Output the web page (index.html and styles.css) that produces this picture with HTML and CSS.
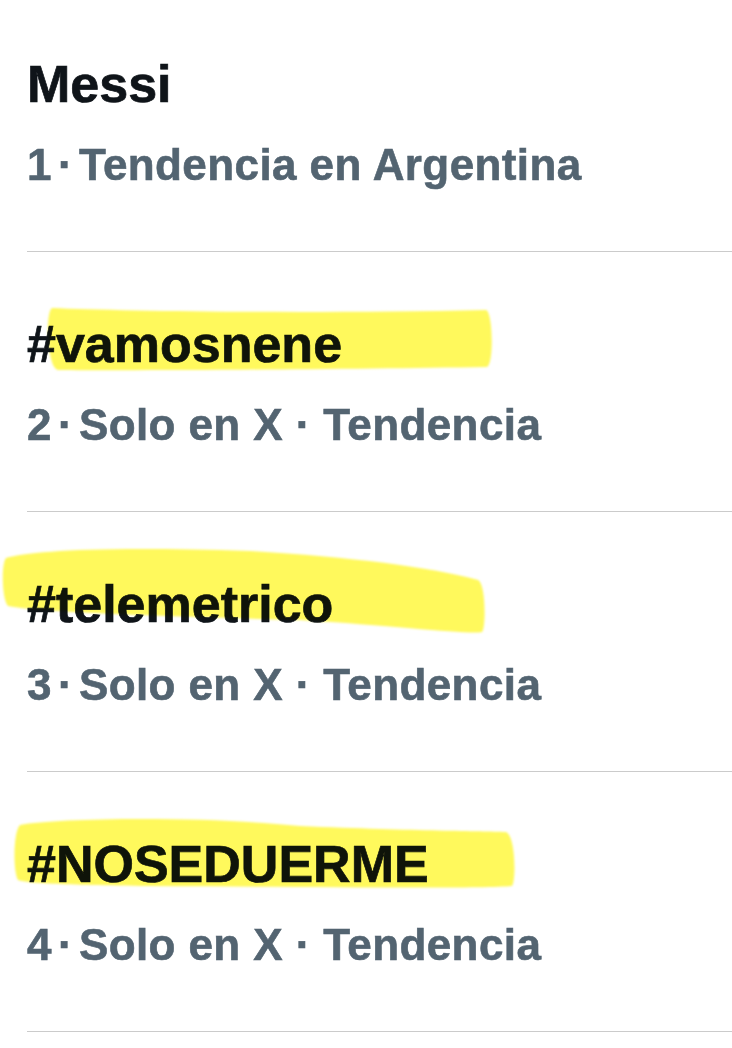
FILE: index.html
```html
<!DOCTYPE html>
<html lang="es">
<head>
  <meta charset="UTF-8" />
  <meta name="viewport" content="width=device-width, initial-scale=1.0" />
  <title>Tendencias</title>
  <link rel="stylesheet" href="styles.css">
</head>
<body>
  <div class="trends">
    <div class="trend">
      <div class="trend-name">Messi</div>
      <div class="trend-meta">1<span class="sep">·</span>Tendencia en Argentina</div>
    </div>

    <div class="trend">
      <div class="trend-name">#vamosnene</div>
      <div class="trend-meta">2<span class="sep">·</span>Solo en X · Tendencia</div>
      <svg class="marker" viewBox="0 0 732 259" width="732" height="259">
        <path d="M52 56 C120 59, 300 62, 486 58 C493 60, 494 112, 487 115 C350 117, 150 119, 58 118 C47 116, 45 60, 52 56 Z" />
      </svg>
    </div>

    <div class="trend">
      <div class="trend-name">#telemetrico</div>
      <div class="trend-meta">3<span class="sep">·</span>Solo en X · Tendencia</div>
      <svg class="marker" viewBox="0 0 732 259" width="732" height="259">
        <path d="M6 46 C30 39, 100 34, 250 39 C350 45, 430 55, 478 68 C486 72, 486 116, 482 120 C470 123, 400 114, 300 108 C150 104, 40 100, 8 94 C2 88, 1 52, 6 46 Z" />
      </svg>
    </div>

    <div class="trend">
      <div class="trend-name">#NOSEDUERME</div>
      <div class="trend-meta">4<span class="sep">·</span>Solo en X · Tendencia</div>
      <svg class="marker" viewBox="0 0 732 259" width="732" height="259">
        <path d="M20 53 C60 46, 200 44, 300 54 C420 59, 480 59, 506 60 C516 64, 516 110, 512 114 C480 117, 300 115, 150 114 C60 113, 25 111, 18 108 C13 100, 13 60, 20 53 Z" />
      </svg>
    </div>
  </div>
</body>
</html>
```

FILE: styles.css
```css
body {
  margin: 0;
  background: #ffffff;
  font-family: "Liberation Sans", Arial, sans-serif;
  overflow: hidden;
}
.trends {
  padding-left: 27px;
}
.trend {
  position: relative;
  padding: 62px 0 60px;
  border-bottom: 1px solid #cbcbcb;
}
.trend:first-child {
  padding-top: 54px;
}
.trend-name {
  font-size: 52px;
  line-height: 60px;
  font-weight: 700;
  color: #0f1419;
  -webkit-text-stroke: 0.7px #0f1419;
}
.trend-meta {
  margin-top: 25px;
  font-size: 44px;
  line-height: 52px;
  font-weight: 700;
  letter-spacing: 0.4px;
  color: #536471;
  -webkit-text-stroke: 0.6px #536471;
}
.sep {
  margin: 0 6px;
}
.marker {
  position: absolute;
  left: -27px;
  top: 0;
  pointer-events: none;
  mix-blend-mode: multiply;
  filter: blur(0.8px);
}
.marker path {
  fill: #fff95c;
}
```
